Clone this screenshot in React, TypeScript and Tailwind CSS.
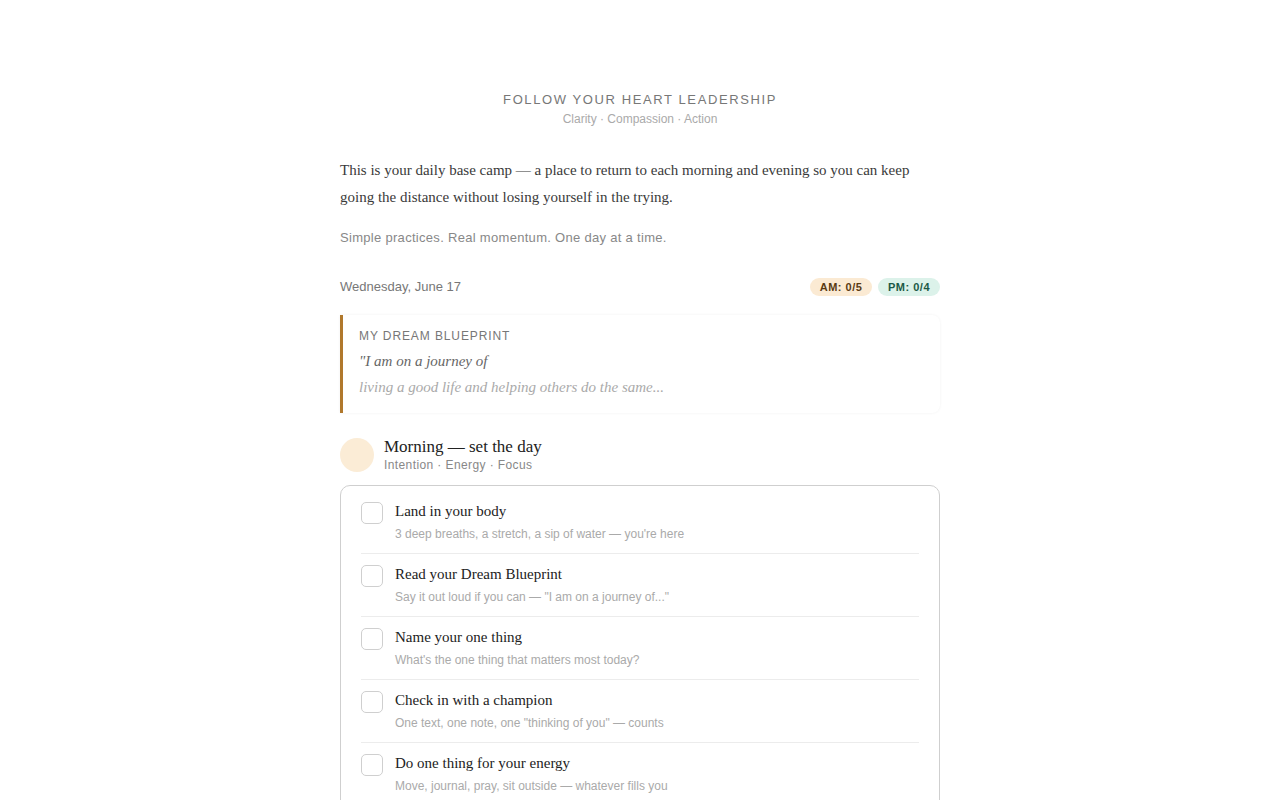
import React from "react";

const morning = [
  { title: "Land in your body", hint: "3 deep breaths, a stretch, a sip of water — you're here" },
  { title: "Read your Dream Blueprint", hint: 'Say it out loud if you can — "I am on a journey of..."' },
  { title: "Name your one thing", hint: "What's the one thing that matters most today?" },
  { title: "Check in with a champion", hint: 'One text, one note, one "thinking of you" — counts' },
  { title: "Do one thing for your energy", hint: "Move, journal, pray, sit outside — whatever fills you" },
];

const sans = "font-['Liberation_Sans',Arial,sans-serif]";
const serif = "font-['Liberation_Serif','Times_New_Roman',serif]";

export default function App() {
  return (
    <main className={`min-h-screen bg-white ${sans}`}>
      <div className="mx-auto flex w-[600px] flex-col pt-[91px] pb-10">
        <header className="text-center">
          <p className="text-[13px] leading-[18px] tracking-[1.6px] text-[#777]">FOLLOW YOUR HEART LEADERSHIP</p>
          <p className="mt-[2px] text-[12px] leading-4 text-[#aaa]">Clarity · Compassion · Action</p>
        </header>

        <p className={`mt-[30px] text-[15px] leading-[27px] text-[#3a3a3a] ${serif}`}>
          This is your daily base camp — a place to return to each morning and evening so you can keep going the
          distance without losing yourself in the trying.
        </p>
        <p className="mt-[17px] text-[13px] leading-5 tracking-[0.3px] text-[#888]">
          Simple practices. Real momentum. One day at a time.
        </p>

        <div className="mt-[30px] flex h-[18px] items-center justify-between">
          <span className="text-[13px] text-[#777]">Wednesday, June 17</span>
          <div className="flex gap-[6px]">
            <span className="flex h-[18px] w-[62px] items-center justify-center rounded-full bg-[#fbead3] text-[11px] font-bold tracking-[0.5px] text-[#5a3a12]">
              AM: 0/5
            </span>
            <span className="flex h-[18px] w-[62px] items-center justify-center rounded-full bg-[#dcf2ea] text-[11px] font-bold tracking-[0.5px] text-[#1c5946]">
              PM: 0/4
            </span>
          </div>
        </div>

        <section className="mt-[19px] h-[98px] rounded-r-[8px] border-l-[3px] border-[#b0782c] bg-white pt-[13px] pl-4 shadow-[0_0_3px_rgba(0,0,0,0.06)]">
          <p className="text-[12px] leading-4 tracking-[0.9px] text-[#777]">MY DREAM BLUEPRINT</p>
          <div className={`mt-1 text-[15px] italic leading-[26px] ${serif}`}>
            <p className="text-[#666]">"I am on a journey of</p>
            <p className="text-[#aaa]">living a good life and helping others do the same...</p>
          </div>
        </section>

        <div className="mt-[23px] flex items-center gap-[10px]">
          <div className="h-[34px] w-[34px] rounded-full bg-[#fbecd6]" />
          <div>
            <h2 className={`text-[17px] leading-[22px] text-[#222] ${serif}`}>Morning — set the day</h2>
            <p className="-mt-px text-[12px] leading-4 tracking-[0.4px] text-[#888]">Intention · Energy · Focus</p>
          </div>
        </div>

        <section className="mt-3 rounded-[10px] border border-[#cfcfcf] px-5 pt-[5px] pb-2">
          {morning.map((item, i) => (
            <div
              key={item.title}
              className={`flex gap-3 pt-[10px] pb-[11px] ${i < morning.length - 1 ? "border-b border-[#ececec]" : ""}`}
            >
              <div className="mt-[1px] h-[22px] w-[22px] shrink-0 rounded-[5px] border border-[#cfcfcf] bg-white" />
              <div>
                <p className={`text-[15px] leading-5 text-[#222] ${serif}`}>{item.title}</p>
                <p className="mt-[5px] text-[12px] leading-4 text-[#aaa]">{item.hint}</p>
              </div>
            </div>
          ))}
        </section>
      </div>
    </main>
  );
}
